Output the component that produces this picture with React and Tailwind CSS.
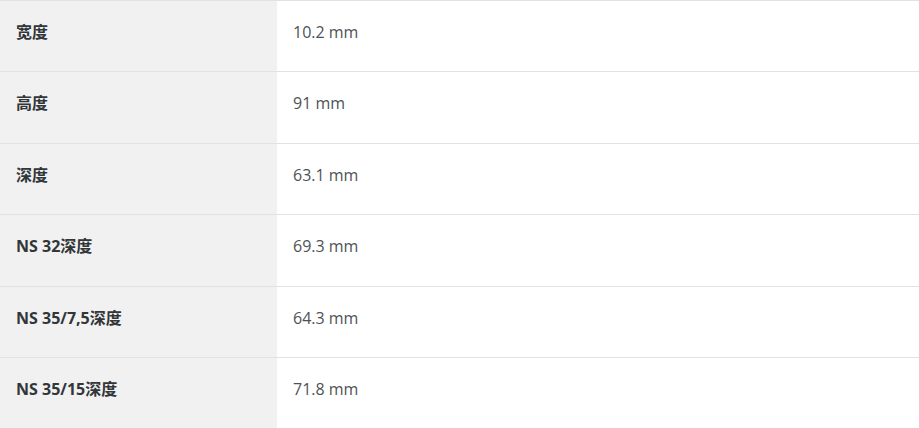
import React from "react";

const rows = [
  ["宽度", "10.2 mm"],
  ["高度", "91 mm"],
  ["深度", "63.1 mm"],
  ["NS 32深度", "69.3 mm"],
  ["NS 35/7,5深度", "64.3 mm"],
  ["NS 35/15深度", "71.8 mm"],
];

export default function App() {
  return (
    <div
      className="w-[919px] h-[428px] overflow-hidden bg-white"
      style={{ fontFamily: '"Open Sans", "Noto Sans CJK SC", sans-serif' }}
    >
      <div className="border-t border-[#e0e2e5]">
        {rows.map(([k, v]) => (
          <div key={k} className="grid grid-cols-[277px_1fr] border-b border-[#e0e2e5]">
            <div className="bg-[#f1f1f1] pl-4 pt-5 pb-[28px] text-[16px] leading-[22.4px] font-bold text-[#323639]">
              {k}
            </div>
            <div className="pl-4 pt-5 pb-[28px] text-[16px] leading-[22.4px] text-[#4e5256]">
              {v}
            </div>
          </div>
        ))}
      </div>
    </div>
  );
}
